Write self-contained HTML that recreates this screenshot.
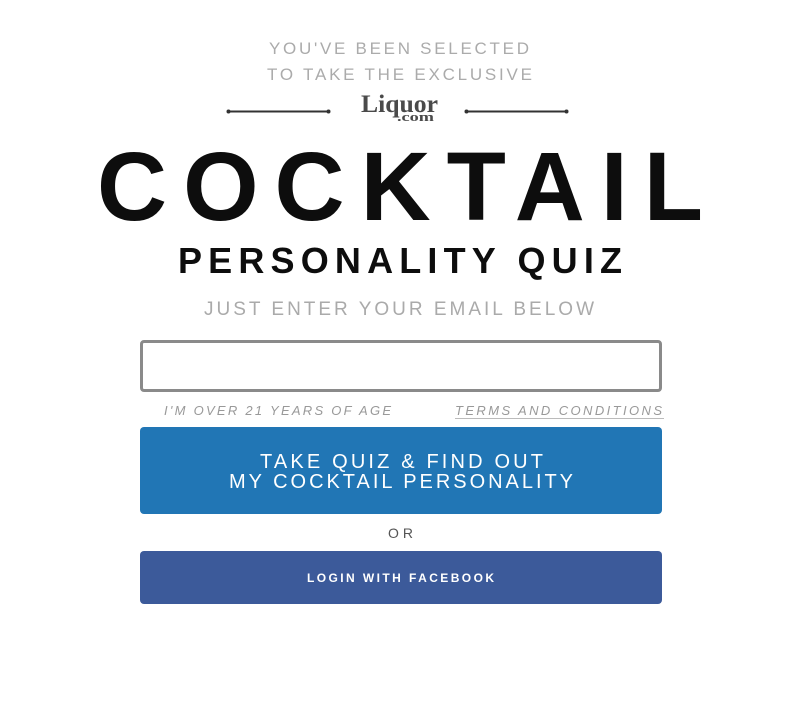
<!DOCTYPE html>
<html><head><style>
html,body{margin:0;padding:0;background:#fff;width:800px;height:712px;overflow:hidden}
.box{position:absolute;left:140px;width:522px;border-radius:4px}
</style></head><body>
<div class="box" style="top:340px;height:46px;border:3px solid #8a8a8a;width:516px;"></div>
<div class="box" style="top:427px;height:87px;background:#2176b5"></div>
<div class="box" style="top:551px;height:53px;background:#3c5a9a"></div>
<svg width="800" height="712" style="position:absolute;left:0;top:0" font-family="Liberation Sans, sans-serif">
<text x="269" y="54" textLength="260" lengthAdjust="spacing" font-size="17" fill="#ababab">YOU'VE BEEN SELECTED</text>
<text x="267" y="80" textLength="265" lengthAdjust="spacing" font-size="17" fill="#ababab">TO TAKE THE EXCLUSIVE</text>
<line x1="228" y1="111.5" x2="329" y2="111.5" stroke="#333" stroke-width="2"/>
<circle cx="228.5" cy="111.5" r="2" fill="#333"/><circle cx="328.5" cy="111.5" r="2" fill="#333"/>
<line x1="466" y1="111.5" x2="567" y2="111.5" stroke="#333" stroke-width="2"/>
<circle cx="466.5" cy="111.5" r="2" fill="#333"/><circle cx="566.5" cy="111.5" r="2" fill="#333"/>
<text x="361" y="112" textLength="77" lengthAdjust="spacingAndGlyphs" font-family="Liberation Serif, serif" font-weight="bold" font-size="25" fill="#4a4a4a">Liquor</text>
<text x="397" y="121" textLength="37" lengthAdjust="spacingAndGlyphs" font-family="Liberation Serif, serif" font-weight="bold" font-size="13" fill="#4a4a4a">.com</text>
<text x="97" y="220" textLength="606" lengthAdjust="spacing" font-weight="bold" font-size="97" fill="#0d0d0d">COCKTAIL</text>
<text x="178" y="273" textLength="444" lengthAdjust="spacing" font-weight="bold" font-size="36" fill="#0d0d0d">PERSONALITY QUIZ</text>
<text x="204" y="315" textLength="390" lengthAdjust="spacing" font-size="19" fill="#aaa">JUST ENTER YOUR EMAIL BELOW</text>
<text x="164" y="415" textLength="227" lengthAdjust="spacing" font-style="italic" font-size="13" fill="#999">I'M OVER 21 YEARS OF AGE</text>
<text x="455" y="415" textLength="207" lengthAdjust="spacing" font-style="italic" font-size="13" fill="#999">TERMS AND CONDITIONS</text>
<line x1="455" y1="418.5" x2="664" y2="418.5" stroke="#bbb" stroke-width="1"/>
<text x="260" y="468" textLength="283" lengthAdjust="spacing" font-size="20" fill="#fff">TAKE QUIZ &amp; FIND OUT</text>
<text x="229" y="488" textLength="344" lengthAdjust="spacing" font-size="20" fill="#fff">MY COCKTAIL PERSONALITY</text>
<text x="388" y="538" textLength="25" lengthAdjust="spacing" font-size="14" fill="#555">OR</text>
<text x="307" y="582" textLength="187" lengthAdjust="spacing" font-weight="bold" font-size="12" fill="#fff">LOGIN WITH FACEBOOK</text>
</svg>
</body></html>
